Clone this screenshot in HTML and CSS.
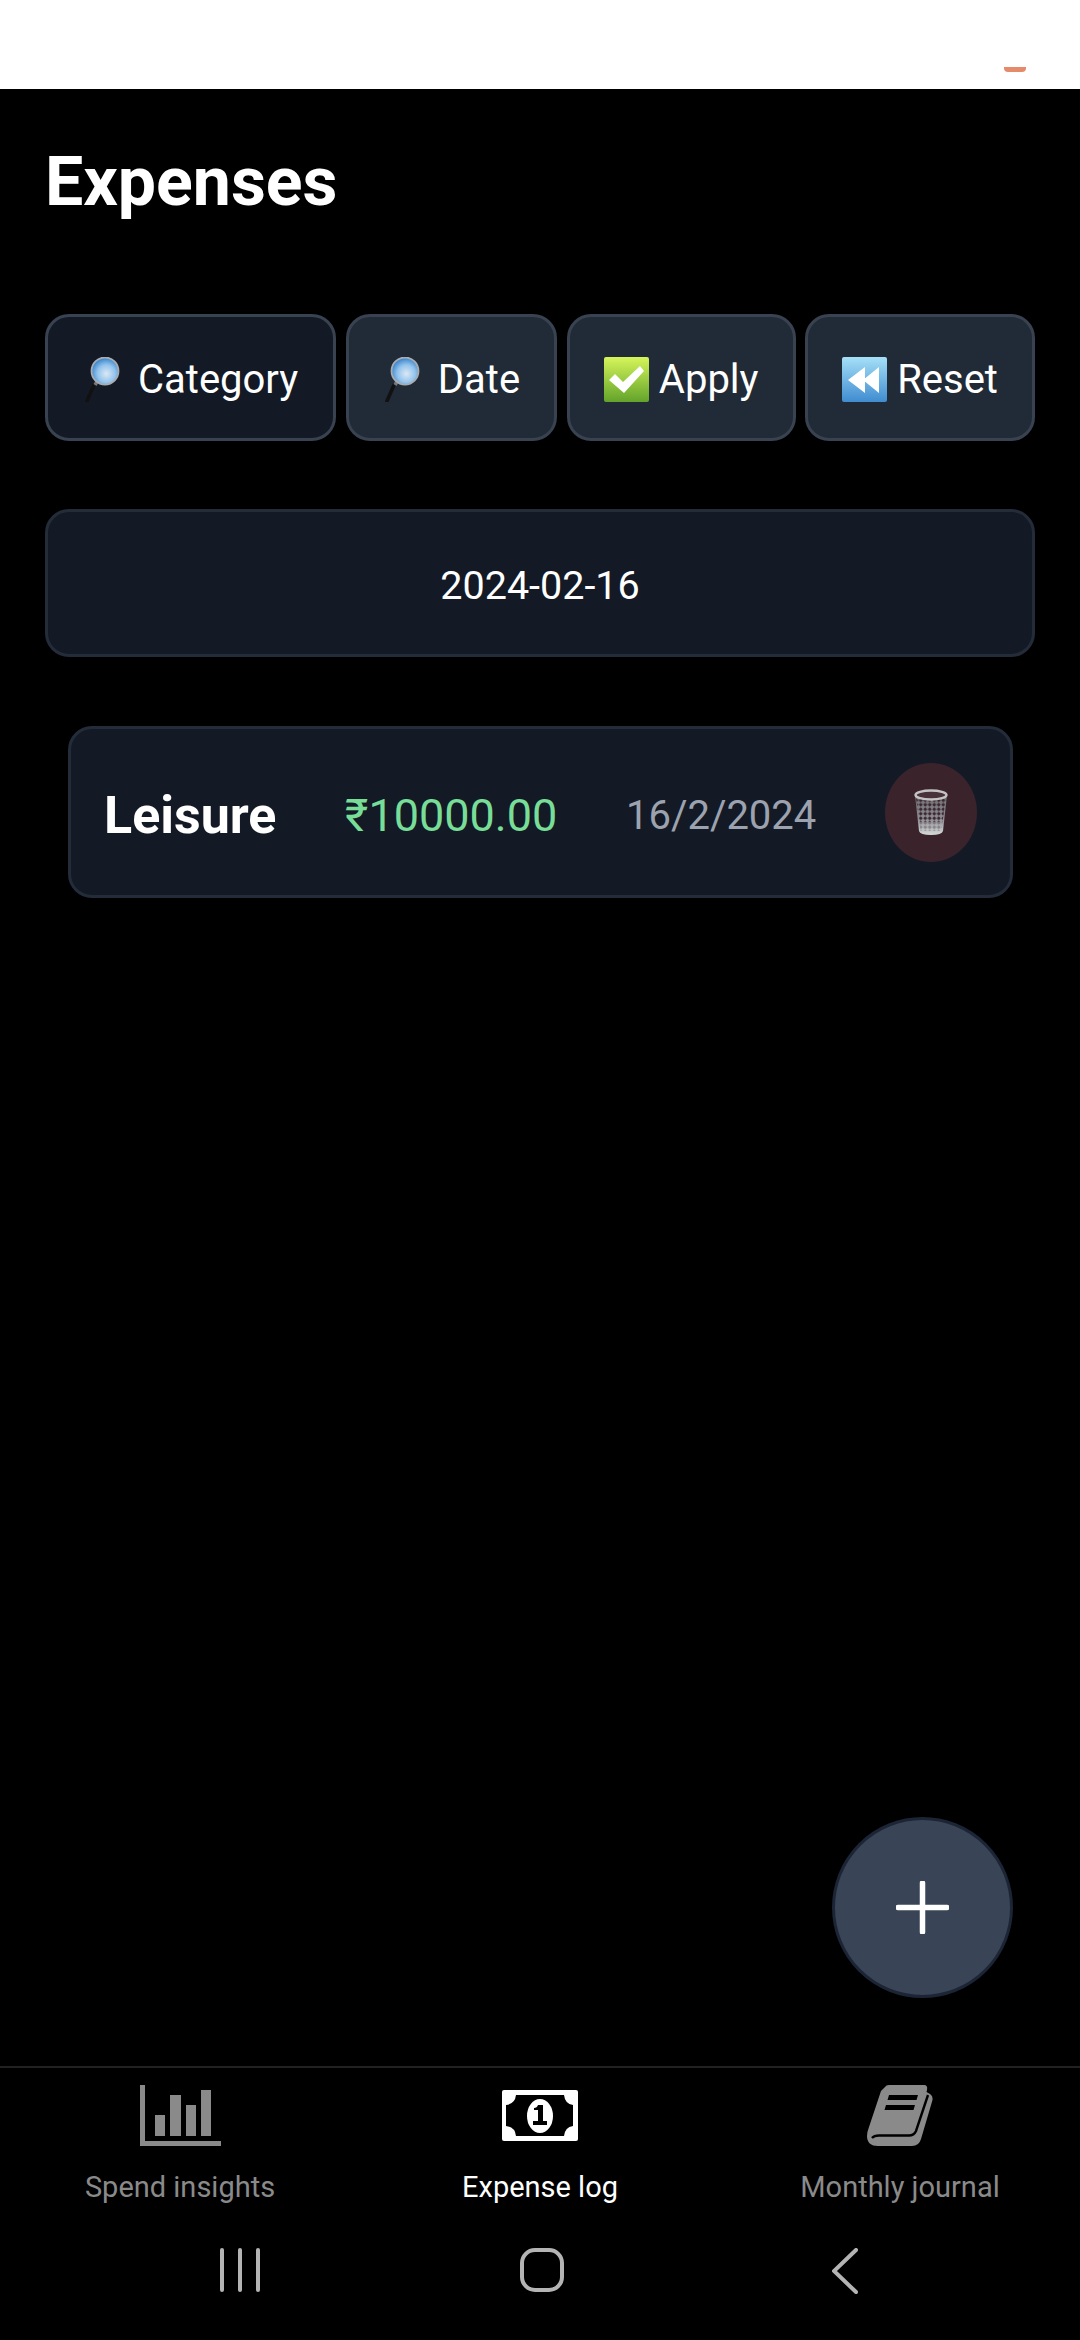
FILE: index.html
```html
<!DOCTYPE html>
<html lang="en">
<head>
<meta charset="utf-8">
<title>Expenses</title>
<link rel="stylesheet" href="styles.css">
</head>
<body>
<header class="topbar"><span class="topbar-mark"></span></header>
<main class="main">
  <h1 class="title">Expenses</h1>
  <div class="filters">
    <button class="chip chip-active">
      <svg class="emoji" viewBox="0 0 45 45"><defs><radialGradient id="lens" cx="55%" cy="60%" r="60%"><stop offset="0" stop-color="#dbe8f5"/><stop offset="0.55" stop-color="#93c3ec"/><stop offset="1" stop-color="#2f7fc9"/></radialGradient></defs><path d="M4 44 L11 28" stroke="#111" stroke-width="3.5" stroke-linecap="round"/><path d="M12 28 L15 23" stroke="#777" stroke-width="3.5"/><circle cx="22" cy="14" r="13.500" fill="url(#lens)" stroke="#a9adb2" stroke-width="1.800"/></svg>
      <span class="chip-label">Category</span>
    </button>
    <button class="chip">
      <svg class="emoji" viewBox="0 0 45 45"><path d="M4 44 L11 28" stroke="#111" stroke-width="3.5" stroke-linecap="round"/><path d="M12 28 L15 23" stroke="#777" stroke-width="3.5"/><circle cx="22" cy="14" r="13.500" fill="url(#lens)" stroke="#a9adb2" stroke-width="1.800"/></svg>
      <span class="chip-label">Date</span>
    </button>
    <button class="chip">
      <svg class="emoji" viewBox="0 0 45 45"><defs><linearGradient id="green" x1="0" y1="0" x2="0" y2="1"><stop offset="0" stop-color="#d6f55a"/><stop offset="1" stop-color="#62a32a"/></linearGradient></defs><rect width="45" height="45" rx="2" fill="url(#green)"/><path d="M5 23 L11 17 L19 25 L36 9 L40 14 L20 36 Z" fill="#fff"/></svg>
      <span class="chip-label">Apply</span>
    </button>
    <button class="chip">
      <svg class="emoji" viewBox="0 0 45 45"><defs><linearGradient id="blue" x1="0" y1="0" x2="0" y2="1"><stop offset="0" stop-color="#a6e0f8"/><stop offset="1" stop-color="#3f8cd0"/></linearGradient></defs><rect width="45" height="45" rx="2" fill="url(#blue)"/><path d="M6 23 L23 10 V36 Z M21 23 L37 10 V36 Z" fill="#fff"/></svg>
      <span class="chip-label">Reset</span>
    </button>
  </div>
  <div class="date-box">2024-02-16</div>
  <article class="card">
    <span class="card-text card-cat">Leisure</span>
    <span class="card-text card-amount">₹10000.00</span>
    <span class="card-text card-date">16/2/2024</span>
    <button class="trash">
      <svg class="trash-icon" viewBox="0 0 34 46"><defs><linearGradient id="bin" x1="0" y1="0" x2="0" y2="1"><stop offset="0" stop-color="#6d6a70"/><stop offset="0.6" stop-color="#8f8e94"/><stop offset="1" stop-color="#d5dad9"/></linearGradient><pattern id="mesh" width="4.500" height="4.500" patternUnits="userSpaceOnUse"><path d="M2.250 0.200 L4.300 2.250 L2.250 4.300 L0.200 2.250 Z" fill="#3a252e"/></pattern></defs><path d="M1 6 L5 42 Q6 46 17 46 Q28 46 29 42 L33 6 Z" fill="url(#bin)"/><path d="M2 9 L5.500 33 H28.500 L32 9 Z" fill="url(#mesh)"/><path d="M5.500 33 L6.500 42 H27.500 L28.500 33 Z" fill="url(#mesh)" opacity="0.35"/><ellipse cx="17" cy="6" rx="15.500" ry="4.500" fill="#4a323b" stroke="#c4c4c4" stroke-width="2.400"/></svg>
    </button>
  </article>
  <button class="fab"><svg class="fab-icon" viewBox="0 0 53 53"><path d="M26.500 2 V51 M2 26.500 H51" stroke="#fff" stroke-width="5.500" stroke-linecap="round"/></svg></button>
</main>
<nav class="tabs">
  <a class="tab">
    <span class="tab-icon"><svg class="icon-bars" viewBox="0 0 81 61"><path d="M0 0H5V56H81V61H0Z M15 30H25V51H15Z M30 10H41V51H30Z M46 20H56V51H46Z M61 5H71V51H61Z" fill="#8a8a8a"/></svg></span>
    <span class="tab-label">Spend insights</span>
  </a>
  <a class="tab tab-active">
    <span class="tab-icon"><svg class="icon-money" viewBox="0 0 76 51"><rect width="76" height="51" rx="2" fill="#fff"/><path d="M14 5H62Q63 14 71 15V36Q63 37 62 46H14Q13 37 4 36V15Q13 14 14 5Z" fill="#000"/><ellipse cx="38" cy="26" rx="13" ry="17" fill="#fff"/><path d="M36 15H41V31H45V35H31V31H36V20H32V18Q35 18 36 15Z" fill="#000"/></svg></span>
    <span class="tab-label">Expense log</span>
  </a>
  <a class="tab">
    <span class="tab-icon"><svg class="icon-book" viewBox="0 0 66 61"><path d="M18 2Q19 0 22 0H57Q61 0 60 5L59.500 7L63 9Q66 11 65.500 15L54 54Q52 61 45 61H11Q0 61 0 51Q0 47 2 42L14 6Z" fill="#8a8a8a"/><path d="M5 53Q7 50.500 12 50.500H42Q47 50.500 49 46L61 10" fill="none" stroke="#000" stroke-width="2.400"/><path d="M22 10H51L49.500 15H20.500Z M19 20H48L46.500 25H17.500Z" fill="#000"/></svg></span>
    <span class="tab-label">Monthly journal</span>
  </a>
</nav>
<div class="sysbar">
  <svg class="sys-recent" viewBox="0 0 40 44"><path d="M2 2V42 M20 2V42 M38 2V42" stroke="#b4b4b4" stroke-width="4" stroke-linecap="round"/></svg>
  <span class="sys-home"></span>
  <svg class="sys-back" viewBox="0 0 26 46"><path d="M24 2 L2 23 L24 44" fill="none" stroke="#b4b4b4" stroke-width="4" stroke-linecap="round" stroke-linejoin="miter"/></svg>
</div>
</body>
</html>
```
FILE: styles.css
```css
* { box-sizing: border-box; }
html, body { margin: 0; padding: 0; }
body {
  width: 1080px;
  height: 2340px;
  overflow: hidden;
  background: #000;
  color: #fff;
  font-family: Roboto, "Noto Sans", sans-serif;
  display: flex;
  flex-direction: column;
}
.topbar {
  height: 89px;
  flex: none;
  background: #fff;
  display: flex;
  justify-content: flex-end;
  align-items: flex-start;
  padding: 67px 54px 0 0;
}
.topbar-mark {
  width: 22px;
  height: 5px;
  background: #e68a6c;
  border-radius: 0 0 4px 4px;
}
.main {
  flex: 1;
  position: relative;
  padding: 0 45px;
  display: flex;
  flex-direction: column;
}
.title {
  margin: 53px 0 0 0;
  height: 77px;
  font-size: 68px;
  line-height: 80px;
  font-weight: 700;
}
.filters {
  margin-top: 95px;
  display: flex;
  justify-content: space-between;
}
.chip {
  height: 127px;
  padding: 4px 34px 0;
  display: flex;
  align-items: center;
  background: #212a37;
  border: 3px solid #394250;
  border-radius: 24px;
  color: #fff;
  font: inherit;
  font-size: 40px;
}
.chip-active { background: #131a26; padding: 4px 35px 0; }
.emoji { width: 45px; height: 45px; flex: none; }
.chip-label { margin-left: 10px; }
.date-box {
  margin-top: 68px;
  height: 148px;
  padding-top: 4px;
  display: flex;
  align-items: center;
  justify-content: center;
  background: #131a26;
  border: 3px solid #242c3a;
  border-radius: 24px;
  font-size: 39.5px;
}
.card {
  margin: 69px 22px 0 23px;
  height: 172px;
  display: flex;
  align-items: center;
  justify-content: space-between;
  padding: 0 33px;
  background: #131a26;
  border: 3px solid #242c3a;
  border-radius: 24px;
}
.card-text { margin-top: 6px; }
.card-cat { font-size: 52px; font-weight: 700; }
.card-amount { font-size: 45px; color: #78dd97; }
.card-date { font-size: 40px; color: #9ca3af; }
.trash {
  width: 92px;
  height: 99px;
  padding: 0;
  border: 0;
  border-radius: 50%;
  background: #3a232b;
  display: flex;
  align-items: center;
  justify-content: center;
}
.trash-icon { width: 34px; height: 46px; }
.fab {
  position: absolute;
  right: 67px;
  bottom: 68px;
  width: 181px;
  height: 181px;
  padding: 0;
  border: 3px solid #1c2535;
  border-radius: 50%;
  background: #394456;
  display: flex;
  align-items: center;
  justify-content: center;
}
.fab-icon { width: 53px; height: 53px; }
.tabs {
  flex: none;
  height: 164px;
  border-top: 2px solid #222;
  display: grid;
  grid-template-columns: repeat(3, 1fr);
}
.tab {
  display: flex;
  flex-direction: column;
  align-items: center;
  padding-top: 17px;
  color: #8a8a8a;
  font-size: 29px;
}
.tab-active { color: #fff; }
.tab-icon {
  height: 61px;
  display: flex;
  align-items: center;
  justify-content: center;
}
.tab-label { margin-top: 24px; line-height: 34px; }
.icon-bars { width: 81px; height: 61px; }
.icon-money { width: 76px; height: 51px; }
.icon-book { width: 66px; height: 61px; }
.sysbar {
  flex: none;
  height: 110px;
  padding: 18px 0 0 220px;
  display: flex;
  align-items: flex-start;
  gap: 260px;
}
.sys-recent { width: 40px; height: 44px; flex: none; }
.sys-home {
  width: 44px;
  height: 44px;
  border: 4px solid #b4b4b4;
  border-radius: 15px;
  flex: none;
}
.sys-back { width: 26px; height: 46px; margin-left: 8px; flex: none; }
```
